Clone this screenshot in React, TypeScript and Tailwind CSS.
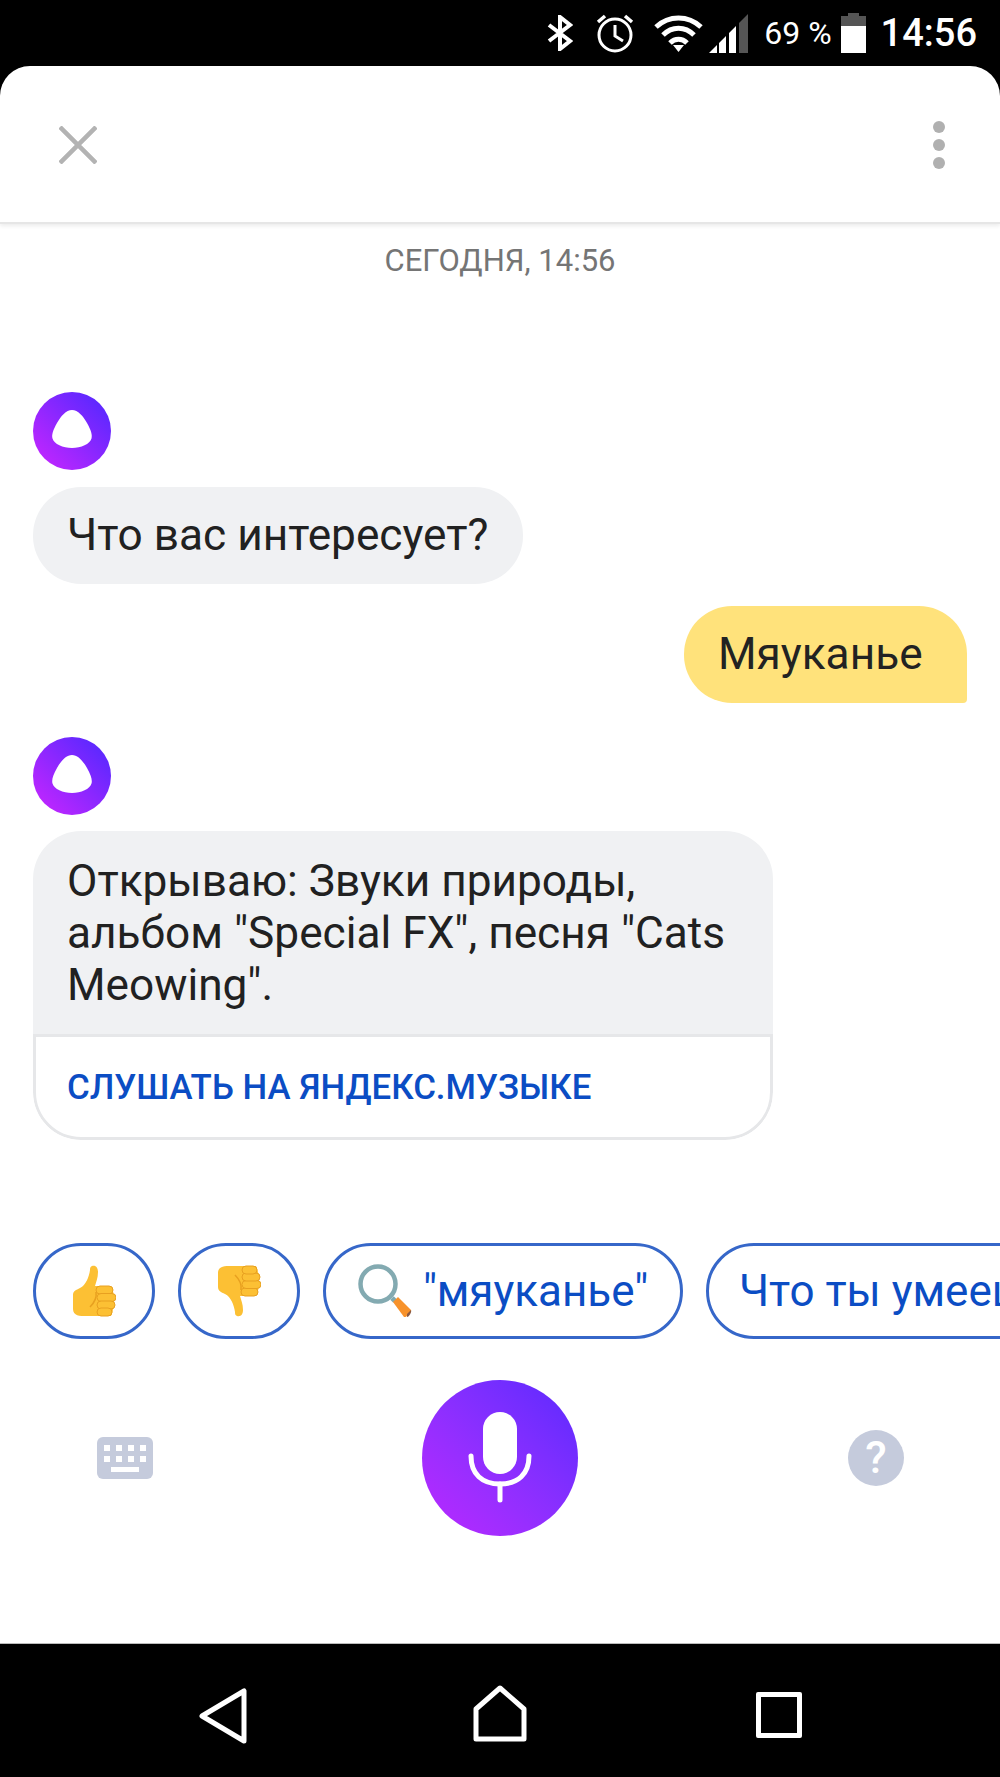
const Avatar = ({ id }: { id: string }) => (
  <svg width="78" height="78" viewBox="0 0 78 78" className="block">
    <defs>
      <linearGradient id={id} x1="0.85" y1="0.15" x2="0.15" y2="0.85">
        <stop offset="0" stopColor="#5f28ff" />
        <stop offset="1" stopColor="#b926ff" />
      </linearGradient>
    </defs>
    <circle cx="39" cy="39" r="39" fill={`url(#${id})`} />
    <path d="M39 18 C45 18 50 24 54 31 C58 38 59.500 43 58.500 46.500 C57 52 48 56 39 56 C30 56 21 52 19.500 46.500 C18.500 43 20 38 24 31 C28 24 33 18 39 18 Z" fill="#fff" />
  </svg>
);

const Thumb = ({ down }: { down?: boolean }) => (
  <svg width="44" height="52" viewBox="0 0 44 52" className={down ? "block -scale-y-100" : "block"}>
    <path d="M20 1 C24 0 26 3 26 7 C26 13 24 17 23 21 L38 21 C42 21 44 41 39 51 L14 51 C8 51 1 51 1 44 L1 30 C1 26 4 25 8 23 C14 20 17 12 18 5 C18 3 18 2 20 1 Z" fill="#fcc034" />
    <g fill="#fcc034" stroke="#e8a020" strokeWidth="1">
      <rect x="24" y="21" width="17" height="8" rx="4" />
      <rect x="25" y="28.500" width="19" height="8" rx="4" />
      <rect x="25" y="36" width="18" height="8" rx="4" />
      <rect x="25" y="43" width="15" height="8" rx="4" />
    </g>
    <path d="M24 27 C25 33 22 38 18 42" fill="none" stroke="#e8a020" strokeWidth="1.500" />
  </svg>
);

const Chip = ({ className, children }: { className: string; children: React.ReactNode }) => (
  <div className={`h-[96px] shrink-0 rounded-[48px] border-[3px] border-[#3667c9] flex items-center ${className}`}>
    {children}
  </div>
);

export default function App() {
  return (
    <div className="w-[1000px] h-[1777px] bg-black flex flex-col overflow-hidden font-['Roboto',sans-serif]">
      {/* Status bar */}
      <div className="h-[66px] shrink-0 flex items-center justify-end text-white relative">
        <svg width="26" height="36" viewBox="0 0 26 36" className="mr-[22px]" fill="none" stroke="#fff" strokeWidth="4">
          <path d="M2 10 L23 26 L13 34 L13 2 L23 10 L2 26" />
        </svg>
        <svg width="40" height="40" viewBox="0 0 40 40" className="mr-[19px]" fill="none" stroke="#fff" strokeWidth="3">
          <circle cx="20" cy="22" r="16" />
          <path d="M20 12 L20 23 L28 28" />
          <path d="M3 9 L10 3 M37 9 L30 3" strokeWidth="3.500" />
        </svg>
        <svg width="49" height="39" viewBox="0 0 49 39" className="mr-[6px]" fill="none" stroke="#fff" strokeWidth="5">
          <path d="M2 13 C15 1 34 1 47 13" />
          <path d="M9 21 C18 12 31 12 40 21" />
          <path d="M16 29 C21 24 28 24 33 29" />
          <path d="M19 31 L24.500 38 L30 31 Z" fill="#fff" stroke="none" />
        </svg>
        <svg width="40" height="39" viewBox="0 0 40 39" className="mr-[15px]">
          <path d="M39 0 L39 39 L30 39 L30 9 Z" fill="#555" />
          <path d="M27 12 L27 39 L20 39 L20 19 Z M17 22 L17 39 L10 39 L10 29 Z M8 31 L8 39 L0 39 Z" fill="#fff" />
        </svg>
        <span className="text-[32px] leading-none mr-[9px]">69 %</span>
        <div className="w-[25px] h-[40px] mr-[15px] flex flex-col items-center">
          <div className="w-[11px] h-[3px] bg-[#555]" />
          <div className="w-[25px] h-[10px] bg-[#555]" />
          <div className="w-[25px] flex-1 bg-white" />
        </div>
        <span className="text-[38px] leading-none font-medium mr-[23px]">14:56</span>
      </div>

      {/* Card */}
      <div className="flex-1 bg-white rounded-t-[30px] flex flex-col overflow-hidden">
        <div className="h-[158px] shrink-0 flex items-center justify-between pl-[59px] pr-[55px] border-b-2 border-[#e6e6e6] shadow-[0_2px_4px_rgba(0,0,0,0.08)]">
          <svg width="38" height="38" viewBox="0 0 38 38" className="mt-[2px]" stroke="#b3b3b3" strokeWidth="4.500">
            <path d="M1 1 L37 37 M37 1 L1 37" />
          </svg>
          <div className="flex flex-col gap-[6px] mt-[2px]">
            <div className="w-[12px] h-[12px] rounded-full bg-[#b0b0b0]" />
            <div className="w-[12px] h-[12px] rounded-full bg-[#b0b0b0]" />
            <div className="w-[12px] h-[12px] rounded-full bg-[#b0b0b0]" />
          </div>
        </div>

        <div className="text-center text-[31px] leading-[34px] text-[#757575] mt-[20px]">СЕГОДНЯ, 14:56</div>

        <div className="mt-[114px] pl-[33px]">
          <Avatar id="a1" />
        </div>
        <div className="mt-[17px] ml-[33px] w-[490px] h-[97px] pl-[34px] flex items-center rounded-[48px] bg-[#f0f1f3] text-[44.200px] text-[#212121] whitespace-nowrap">
          Что вас интересует?
        </div>

        <div className="mt-[22px] mr-[33px] self-end h-[97px] w-[283px] pl-[34px] flex items-center rounded-[48px] rounded-br-[4px] bg-[#ffe27b] text-[44.200px] text-[#222]">
          Мяуканье
        </div>

        <div className="mt-[34px] pl-[33px]">
          <Avatar id="a2" />
        </div>
        <div className="mt-[16px] ml-[33px] w-[740px] h-[309px] rounded-[48px] overflow-hidden flex flex-col">
          <div className="h-[203px] shrink-0 bg-[#f0f1f3] px-[34px] pt-[24px] text-[44.200px] leading-[52px] text-[#212121] whitespace-nowrap">
            Открываю: Звуки природы,<br />альбом "Special FX", песня "Cats<br />Meowing".
          </div>
          <div className="flex-1 flex items-center pl-[31px] border-[3px] border-[#e6e7e9] rounded-b-[48px] text-[34.800px] font-medium text-[#0b4dc4]">
            СЛУШАТЬ НА ЯНДЕКС.МУЗЫКЕ
          </div>
        </div>

        {/* Chips */}
        <div className="mt-[103px] flex gap-[23px] pl-[33px] overflow-hidden">
          <Chip className="w-[122px] justify-center">
            <Thumb />
          </Chip>
          <Chip className="w-[122px] justify-center">
            <Thumb down />
          </Chip>
          <Chip className="w-[360px] pl-[32px] text-[44px] text-[#0b4dc4]">
            <svg width="54" height="54" viewBox="0 0 54 54" className="mr-[11px] shrink-0">
              <path d="M34 34 L37 37" stroke="#7fa9b0" strokeWidth="5" />
              <path d="M35 38 L40 33 L53 46 C54 48 48 54 46 53 Z" fill="#f7922b" />
              <path d="M49 50 L53 46 C54 48 51 53 49 53 Z" fill="#8a5a44" />
              <circle cx="20" cy="20" r="17.500" fill="none" stroke="#83aab1" strokeWidth="4.500" />
            </svg>
            "мяуканье"
          </Chip>
          <Chip className="w-[380px] pl-[30px] text-[44px] text-[#0b4dc4] whitespace-nowrap">
            Что ты умеешь?
          </Chip>
        </div>

        {/* Controls */}
        <div className="mt-[41px] flex items-center justify-between pl-[97px] pr-[96px]">
          <div className="w-[56px] h-[42px] rounded-[6px] bg-[#c5cbdc] flex flex-col items-center pt-[8px] gap-[3px]">
            <div className="flex gap-[6px]">
              {[0, 1, 2, 3].map((i) => (
                <div key={i} className="w-[6px] h-[6px] bg-white" />
              ))}
            </div>
            <div className="flex gap-[6px] mt-[2px]">
              {[0, 1, 2, 3].map((i) => (
                <div key={i} className="w-[6px] h-[6px] bg-white" />
              ))}
            </div>
            <div className="w-[28px] h-[5px] bg-white mt-[2px]" />
          </div>
          <div className="w-[156px] h-[156px] mr-[2px] rounded-full bg-gradient-to-tr from-[#bb26ff] to-[#5a28ff] flex items-center justify-center">
            <svg width="64" height="92" viewBox="0 0 64 92" fill="none">
              <rect x="15" y="0" width="34" height="62" rx="17" fill="#fff" />
              <path d="M3 44 C3 62 14 72 32 72 C50 72 61 62 61 44" stroke="#fff" strokeWidth="5" strokeLinecap="round" />
              <path d="M32 72 L32 88" stroke="#fff" strokeWidth="5" strokeLinecap="round" />
            </svg>
          </div>
          <div className="w-[56px] h-[56px] rounded-full bg-[#c5cbdc] flex items-center justify-center text-white text-[44px] font-medium leading-none">
            ?
          </div>
        </div>
        <div className="flex-1" />
      </div>

      {/* Nav bar */}
      <div className="h-[134px] shrink-0 bg-black border-t border-[#bbb] relative flex items-start pt-[41px] pl-[199px]">
        <svg width="48" height="56" viewBox="0 0 48 56" className="mt-[3px]" fill="none" stroke="#fff" strokeWidth="5" strokeLinejoin="round">
          <path d="M3 28 L45 3 L45 53 Z" />
        </svg>
        <svg width="54" height="58" viewBox="0 0 54 58" className="ml-[226px]" fill="none" stroke="#fff" strokeWidth="5" strokeLinejoin="round">
          <path d="M3 24 L27 3 L51 24 L51 54 L3 54 Z" />
        </svg>
        <div className="w-[46px] h-[46px] ml-[229px] mt-[7px] border-[5px] border-white rounded-[2px]" />
      </div>
    </div>
  );
}
